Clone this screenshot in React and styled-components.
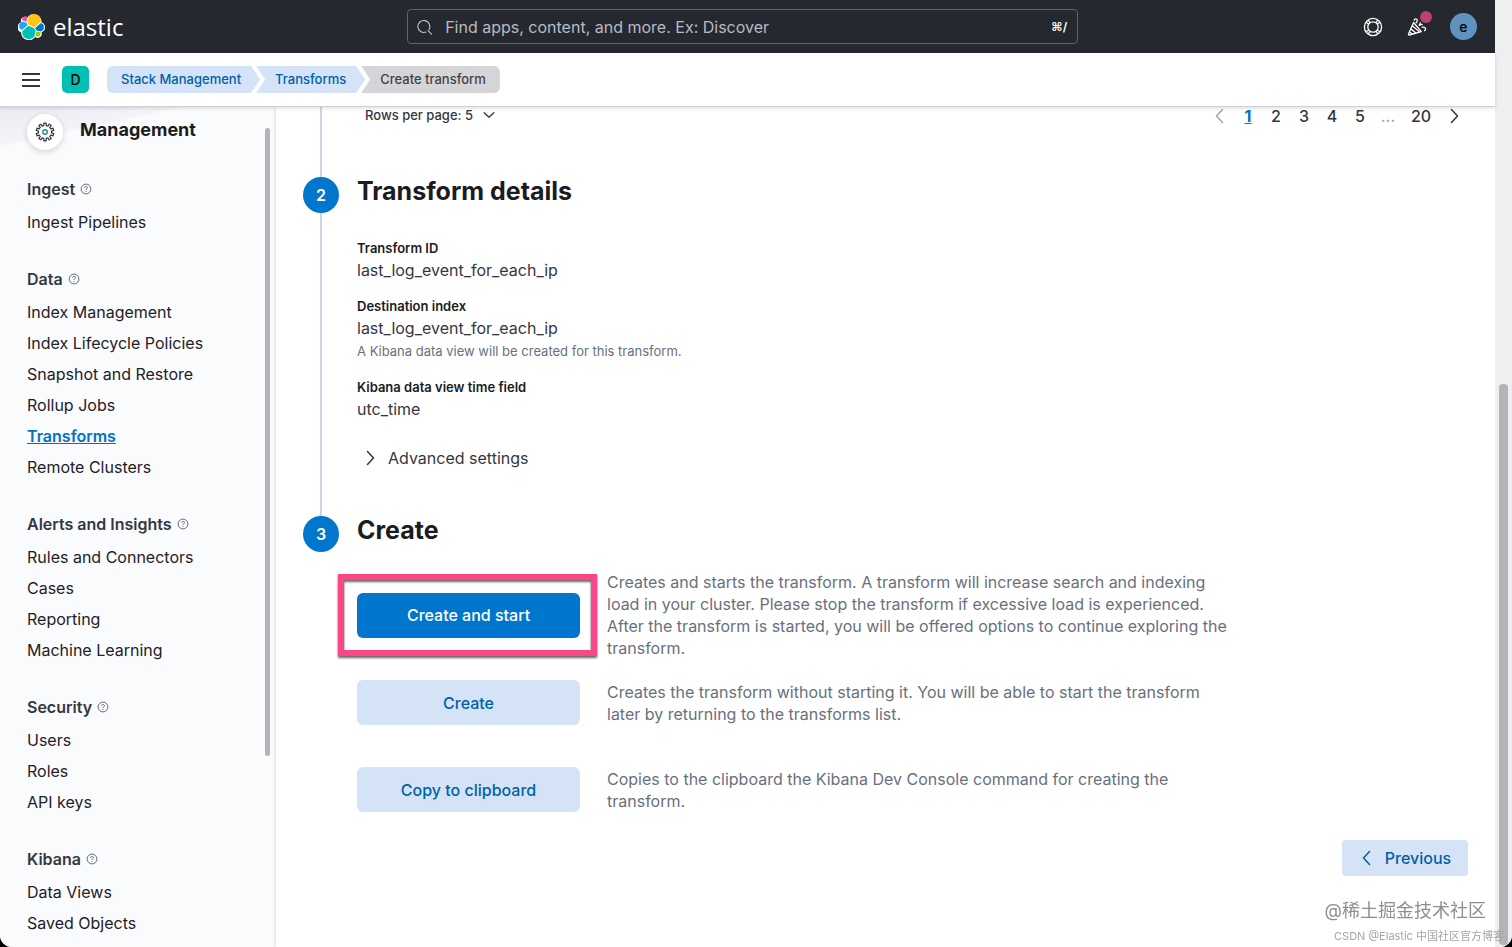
import React from 'react';
import styled, { createGlobalStyle } from 'styled-components';

const GlobalStyle = createGlobalStyle`
* {
    box-sizing: border-box;
}

body {
    margin: 0;
    background: #000;
    color: #343741;
    font-family: Inter, 'Noto Sans CJK SC', sans-serif;
    font-size: 16px;
}

button, input, select {
    font: inherit;
    color: inherit;
    border: 0;
    padding: 0;
    background: none;
}

button {
    cursor: pointer;
}

h1, h2, h3, p, ul, ol, dl, dd {
    margin: 0;
    padding: 0;
    list-style: none;
}
`

const Window = styled.div`
display: grid;
grid-template-columns: minmax(0, 1fr) 17px;
height: 100vh;
overflow: hidden;
background: #fff;
border-radius: 0 0 12px 12px;
`

const Page = styled.div`
display: flex;
flex-direction: column;
min-height: 0;
`

const Rail = styled.div`
display: flex;
flex-direction: column;
justify-content: flex-end;
align-items: center;
padding-bottom: 2px;
background: #eeeff1;
`

const Thumb = styled.div`
width: ${props => props.$width}px;
height: ${props => props.$height};
border-radius: 4px;
background: #b3b4b7;
`

const TopBar = styled.header`
display: flex;
align-items: center;
justify-content: space-between;
flex: none;
height: 53px;
padding: 0 18px;
background: #25282f;
color: #fff;
`

const Logo = styled.a`
display: flex;
align-items: center;
gap: 8px;
color: #fff;
text-decoration: none;
font: 400 24px/32px 'Open Sans', sans-serif;
`

const Search = styled.label`
display: flex;
align-items: center;
gap: 12px;
width: 46%;
height: 35px;
padding: 0 10px 0 9px;
border: 1px solid #5f636c;
border-radius: 4px;
color: #c5c7cb;
`

const SearchInput = styled.input`
flex: 1;
min-width: 0;
outline: none;

&::placeholder {
    color: #b9bbc0;
    opacity: 1;
}
`

const Shortcut = styled.span`
font-size: 12px;
font-weight: 600;
color: #fff;
`

const Actions = styled.div`
display: flex;
align-items: center;
gap: 22px;
`

const IconButton = styled.button`
position: relative;
display: flex;
align-items: center;
justify-content: center;
min-width: 22px;
height: 27px;
color: inherit;
`

const Dot = styled.span`
position: absolute;
top: -2px;
right: -4px;
width: 12px;
height: 12px;
border-radius: 50%;
background: #bf3f76;
`

const Avatar = styled.button`
width: 27px;
height: 27px;
border-radius: ${props => (props.$square ? '5px' : '50%')};
background: ${props => props.$color};
color: #000;
font-size: 14px;
line-height: 27px;
font-weight: 500;
`

const SubBar = styled.div`
position: relative;
z-index: 1;
display: flex;
align-items: center;
flex: none;
gap: 18px;
height: 54px;
padding: 0 18px;
background: #fff;
border-bottom: 1px solid #cfd1d6;
box-shadow: 0 1px 4px rgba(0, 0, 0, 0.15);
`

const MenuButton = styled(IconButton)`
width: 26px;
`

const Crumbs = styled.ol`
display: flex;
`

const Crumb = styled.li`
height: 27px;
padding: 0 19px;
background: #d4e3f7;
color: #0061a6;
font-size: 13px;
line-height: 27px;
font-weight: 500;
clip-path: polygon(0 0, calc(100% - 9px) 0, 100% 50%, calc(100% - 9px) 100%, 0 100%, 9px 50%);

a {
    color: inherit;
    text-decoration: none;
}

& + & {
    margin-left: -4px;
}

&:first-child {
    padding-left: 14px;
    border-radius: 6px 0 0 6px;
    clip-path: polygon(0 0, calc(100% - 9px) 0, 100% 50%, calc(100% - 9px) 100%, 0 100%);
}

&:last-child {
    padding-right: 14px;
    border-radius: 0 6px 6px 0;
    background: #d5d5d8;
    color: #404249;
    clip-path: polygon(0 0, 100% 0, 100% 100%, 0 100%, 9px 50%);
}
`

const Body = styled.div`
display: flex;
flex: 1;
min-height: 0;
`

const Sidebar = styled.aside`
display: flex;
justify-content: space-between;
flex: none;
width: 276px;
padding-right: 6px;
overflow: hidden;
background: linear-gradient(168deg, #e9ebf2 0, #f2f4f8 48%, transparent 51%) 0 0 / 190px 38px no-repeat, #fafbfd;
`

const SideContent = styled.nav`
padding: 7px 0 0 27px;
`

const SideTrack = styled.div`
padding-top: 21px;
`

const SideHeader = styled.div`
display: flex;
gap: 17px;
margin-bottom: 21px;
`

const SideIcon = styled.span`
display: flex;
align-items: center;
justify-content: center;
width: 36px;
height: 36px;
border-radius: 50%;
background: #fff;
box-shadow: 0 2px 6px rgba(0, 0, 0, 0.16);
`

const SideTitle = styled.h1`
font-size: 18px;
line-height: 32px;
font-weight: 700;
color: #1a1c21;
`

const Group = styled.section`
margin-bottom: 23px;
`

const GroupTitle = styled.h2`
display: flex;
align-items: center;
gap: 5px;
height: 36px;
font-size: 16px;
font-weight: 600;
`

const SideLink = styled.a`
display: block;
font-size: 16px;
line-height: 31px;
font-weight: ${props => (props.$active ? 600 : 400)};
color: ${props => (props.$active ? '#0071c2' : '#1f2127')};
text-decoration: ${props => (props.$active ? 'underline' : 'none')};
`

const Main = styled.main`
display: flex;
flex-direction: column;
flex: 1;
min-width: 0;
padding: 0 27px;
background: #fff;
box-shadow: 0 0 4px rgba(0, 0, 0, 0.2);
`

const Step = styled.section`
display: grid;
grid-template-columns: 36px minmax(0, 1fr);
column-gap: 18px;
`

const StepSide = styled.div`
display: flex;
flex-direction: column;
align-items: center;
`

const StepNumber = styled.span`
width: 36px;
height: 36px;
border-radius: 50%;
background: #0077cc;
color: #fff;
font-size: 16px;
line-height: 36px;
font-weight: 600;
text-align: center;
`

const StepLine = styled.span`
flex: 1;
width: 2px;
background: #d0d3e4;
`

const StepTitle = styled.h2`
font-size: 25px;
line-height: 28px;
font-weight: 700;
color: #1a1c21;
`

const TableFooter = styled.div`
display: flex;
justify-content: space-between;
height: 70px;
padding-left: 8px;
`

const RowsButton = styled.button`
display: flex;
align-items: center;
gap: 9px;
height: 16px;
font-size: 13px;
line-height: 16px;
font-weight: 500;
`

const Pager = styled.nav`
display: flex;
align-items: center;
height: 18px;
`

const PageButton = styled.button`
display: flex;
align-items: center;
justify-content: center;
width: ${props => (props.$wide ? 38 : 28)}px;
font-size: 16px;
line-height: 18px;
font-weight: ${props => (props.$active ? 700 : 500)};
color: ${props => (props.$active ? '#0071c2' : props.$muted ? '#a2a5ad' : '#343741')};
text-decoration: ${props => (props.$active ? 'underline' : 'none')};
`

const Details = styled.dl`
padding-top: 33px;
`

const Field = styled.div`
margin-bottom: 13px;
`

const FieldLabel = styled.dt`
font-size: 13px;
line-height: 20px;
font-weight: 600;
color: #1a1c21;
`

const FieldValue = styled.dd`
font-size: 16px;
line-height: 25px;
`

const FieldHelp = styled.dd`
padding-bottom: 3px;
font-size: 13px;
line-height: 20px;
color: #69707d;
`

const Accordion = styled.button`
display: flex;
align-items: center;
gap: 10px;
height: 24px;
margin: 24px 0 46px 5px;
`

const Options = styled.div`
padding-top: 27px;
`

const Option = styled.div`
display: grid;
grid-template-columns: 223px minmax(0, 630px);
align-items: center;
column-gap: 27px;
min-height: 87px;
`

const ButtonCell = styled.div`
position: relative;
`

const Highlight = styled.span`
position: absolute;
inset: -19px -17px -18px -19px;
border: 6px solid #fb4787;
filter: drop-shadow(0 2px 1px rgba(0, 0, 0, 0.6));
pointer-events: none;
`

const Button = styled.button`
display: block;
width: 100%;
height: 45px;
border-radius: 6px;
background: ${props => (props.$primary ? '#0077cc' : '#d4e3f6')};
color: ${props => (props.$primary ? '#fff' : '#0061a6')};
font-size: 16px;
font-weight: 500;
`

const OptionText = styled.p`
line-height: 22px;
color: #69707d;
`

const Previous = styled(Button)`
display: flex;
align-items: center;
align-self: flex-end;
justify-content: center;
gap: 10px;
flex: none;
width: 126px;
height: 36px;
margin-top: 7px;
border-radius: 4px;
`

const Watermark = styled.div`
position: fixed;
right: ${props => props.$right}px;
bottom: ${props => props.$bottom}px;
z-index: 2;
font-size: ${props => props.$size}px;
line-height: 20px;
color: ${props => props.$color};
white-space: nowrap;
`

const groups = [
    { title: 'Ingest', links: ['Ingest Pipelines'] },
    {
        title: 'Data',
        links: [
            'Index Management',
            'Index Lifecycle Policies',
            'Snapshot and Restore',
            'Rollup Jobs',
            'Transforms',
            'Remote Clusters'
        ]
    },
    { title: 'Alerts and Insights', links: ['Rules and Connectors', 'Cases', 'Reporting', 'Machine Learning'] },
    { title: 'Security', links: ['Users', 'Roles', 'API keys'] },
    { title: 'Kibana', links: ['Data Views', 'Saved Objects'] }
]

const options = [
    {
        label: 'Create and start',
        primary: true,
        text: 'Creates and starts the transform. A transform will increase search and indexing load in your cluster. Please stop the transform if excessive load is experienced. After the transform is started, you will be offered options to continue exploring the transform.'
    },
    {
        label: 'Create',
        text: 'Creates the transform without starting it. You will be able to start the transform later by returning to the transforms list.'
    },
    {
        label: 'Copy to clipboard',
        text: 'Copies to the clipboard the Kibana Dev Console command for creating the transform.'
    }
]

const ElasticMark = () => (
    <svg width="27" height="27" viewBox="0 0 32 32" aria-hidden="true">
        <path fill="#fff" d="M32 16.77a6.3 6.3 0 0 0-4.14-5.9 9.2 9.2 0 0 0-16.63-5.4 4.9 4.9 0 0 0-7.56 5.64 6.35 6.35 0 0 0 .02 11.96 9.2 9.2 0 0 0 16.6 5.36 4.9 4.9 0 0 0 7.55-5.6A6.3 6.3 0 0 0 32 16.77" />
        <path fill="#fec514" d="m12.58 13.79 7 3.2 7.07-6.2a7.9 7.9 0 0 0-14.3-6l-1.17 6z" />
        <path fill="#00bfb3" d="M5.33 21.22a7.9 7.9 0 0 0 14.35 6.02l1.16-6.07-1.55-2.97-7.04-3.2z" />
        <path fill="#f04e98" d="m5.29 9.1 4.8 1.13 1.05-5.46A3.8 3.8 0 0 0 5.29 9.1" />
        <path fill="#1ba9f5" d="M4.87 10.25a5.3 5.3 0 0 0-.1 10l6.73-6.1-1.23-2.64z" />
        <path fill="#93c90e" d="M20.87 27.2a3.78 3.78 0 0 0 5.84-4.3l-4.8-1.12z" />
        <path fill="#07c" d="m21.84 20.6 5.28 1.24a5.3 5.3 0 0 0 .1-10.01l-6.91 6.06z" />
    </svg>
)

const SearchIcon = () => (
    <svg width="16" height="16" viewBox="0 0 16 16" fill="none" stroke="currentColor" strokeWidth="1.1" strokeLinecap="round" aria-hidden="true">
        <path d="M9 13.1A6 6 0 1 1 12.1 10.4M11.1 11.6l3.4 3.6" />
    </svg>
)

const HelpRing = () => (
    <svg width="20" height="20" viewBox="0 0 20 20" fill="none" stroke="currentColor" strokeWidth="1.3" aria-hidden="true">
        <circle cx="10" cy="10" r="8.6" />
        <circle cx="10" cy="10" r="5.2" />
        <path d="M3.2 5.2l2.7 2.100M5.200 3.200l2.100 2.700M16.800 5.200l-2.700 2.100M14.800 3.200l-2.100 2.700M3.200 14.800l2.700-2.100M5.200 16.800l2.100-2.700M16.800 14.800l-2.700-2.100M14.800 16.800l-2.100-2.700" />
    </svg>
)

const CheerIcon = () => (
    <svg width="20" height="20" viewBox="0 0 20 20" fill="none" stroke="currentColor" strokeWidth="1.3" strokeLinecap="round" strokeLinejoin="round" aria-hidden="true">
        <path d="M6.6 5.5 1.5 17.1c-.2.7.2 1 .8.9l12-3.4zM5.3 8.8l7.3 6.2M4 12l4.8 4M2.7 15l2.4 2" />
        <path d="M7.2 3.2c.2-1.8 2.9-1.8 3.1.1.1 1-.5 1.9-1.1 2.5M12.2 8.4l1.2-2.6M12.2 8.4l3-1M15.3 10.4c1.8-.8 3.6.4 3.2 2-.1.6-.5 1-.9 1.2" />
    </svg>
)

const MenuIcon = () => (
    <svg width="18" height="14" viewBox="0 0 18 14" stroke="#343741" strokeWidth="2" aria-hidden="true">
        <path d="M0 1h18M0 7h18M0 13h18" />
    </svg>
)

// ten square teeth around a 20px box, angles in degrees from each tooth's centre
const gearPoints = Array.from({ length: 10 }, (_, tooth) =>
    [[-10, 6.6], [-8, 8.9], [8, 8.9], [10, 6.6]].map(([offset, radius]) => {
        const angle = ((tooth * 36 + offset) * Math.PI) / 180
        return `${(10 + radius * Math.sin(angle)).toFixed(2)},${(10 - radius * Math.cos(angle)).toFixed(2)}`
    }).join(' ')
).join(' ')

const GearIcon = () => (
    <svg width="20" height="20" viewBox="0 0 20 20" fill="none" strokeWidth="1.2" aria-hidden="true">
        <polygon points={gearPoints} stroke="#343741" strokeLinejoin="round" />
        <circle cx="10" cy="10" r="2.3" stroke="#17967f" strokeWidth="1.4" />
    </svg>
)

const QuestionIcon = () => (
    <svg width="12" height="12" viewBox="0 0 12 12" fill="none" stroke="#5a5e68" strokeWidth="0.9" aria-hidden="true">
        <circle cx="6" cy="6" r="4.9" />
        <path d="M4.6 4.9c0-1.9 2.9-1.8 2.9-.2C7.5 5.8 6 5.7 6 7M6 8v.9" />
    </svg>
)

const arrows = {
    left: 'M10.5 1.5 4.5 8l6 6.5',
    right: 'M5.5 1.5l6 6.5-6 6.5',
    down: 'M2.5 5.5 8 10.5l5.5-5'
}

const Arrow = ({ to, size = 16 }) => (
    <svg width={size} height={size} viewBox="0 0 16 16" fill="none" stroke="currentColor" strokeWidth="1.5" strokeLinecap="round" strokeLinejoin="round" aria-hidden="true">
        <path d={arrows[to]} />
    </svg>
)

const Header = () => (
    <>
        <TopBar>
            <Logo href="#home">
                <ElasticMark />
                elastic
            </Logo>
            <Search>
                <SearchIcon />
                <SearchInput type="text" aria-label="Search" placeholder="Find apps, content, and more. Ex: Discover" />
                <Shortcut>⌘/</Shortcut>
            </Search>
            <Actions>
                <IconButton aria-label="Help"><HelpRing /></IconButton>
                <IconButton aria-label="News">
                    <CheerIcon />
                    <Dot />
                </IconButton>
                <Avatar $color="#6092c0">e</Avatar>
            </Actions>
        </TopBar>
        <SubBar>
            <MenuButton aria-label="Menu"><MenuIcon /></MenuButton>
            <Avatar $square $color="#00bfb3">D</Avatar>
            <Crumbs>
                <Crumb><a href="#management">Stack Management</a></Crumb>
                <Crumb><a href="#transforms">Transforms</a></Crumb>
                <Crumb aria-current="page">Create transform</Crumb>
            </Crumbs>
        </SubBar>
    </>
)

const SideNav = () => (
    <Sidebar>
        <SideContent>
            <SideHeader>
                <SideIcon><GearIcon /></SideIcon>
                <SideTitle>Management</SideTitle>
            </SideHeader>
            {groups.map(group => (
                <Group key={group.title}>
                    <GroupTitle>
                        {group.title}
                        <QuestionIcon />
                    </GroupTitle>
                    {group.links.map(link => (
                        <SideLink key={link} href="#nav" $active={link === 'Transforms'}>{link}</SideLink>
                    ))}
                </Group>
            ))}
        </SideContent>
        <SideTrack>
            <Thumb $width={5} $height="628px" />
        </SideTrack>
    </Sidebar>
)

const App = () => {
    return (
        <Window>
            <GlobalStyle />
            <Page>
                <Header />
                <Body>
                    <SideNav />
                    <Main>
                        <Step>
                            <StepSide><StepLine /></StepSide>
                            <TableFooter>
                                <RowsButton>
                                    Rows per page: 5
                                    <Arrow to="down" size={14} />
                                </RowsButton>
                                <Pager aria-label="Pagination">
                                    <PageButton $muted aria-label="Previous page"><Arrow to="left" /></PageButton>
                                    <PageButton $active>1</PageButton>
                                    {[2, 3, 4, 5].map(page => <PageButton key={page}>{page}</PageButton>)}
                                    <PageButton as="span" $muted>...</PageButton>
                                    <PageButton $wide>20</PageButton>
                                    <PageButton aria-label="Next page"><Arrow to="right" /></PageButton>
                                </Pager>
                            </TableFooter>
                        </Step>
                        <Step>
                            <StepSide>
                                <StepNumber>2</StepNumber>
                                <StepLine />
                            </StepSide>
                            <div>
                                <StepTitle>Transform details</StepTitle>
                                <Details>
                                    <Field>
                                        <FieldLabel>Transform ID</FieldLabel>
                                        <FieldValue>last_log_event_for_each_ip</FieldValue>
                                    </Field>
                                    <Field>
                                        <FieldLabel>Destination index</FieldLabel>
                                        <FieldValue>last_log_event_for_each_ip</FieldValue>
                                        <FieldHelp>A Kibana data view will be created for this transform.</FieldHelp>
                                    </Field>
                                    <Field>
                                        <FieldLabel>Kibana data view time field</FieldLabel>
                                        <FieldValue>utc_time</FieldValue>
                                    </Field>
                                </Details>
                                <Accordion aria-expanded="false">
                                    <Arrow to="right" />
                                    Advanced settings
                                </Accordion>
                            </div>
                        </Step>
                        <Step>
                            <StepSide>
                                <StepNumber>3</StepNumber>
                            </StepSide>
                            <div>
                                <StepTitle>Create</StepTitle>
                                <Options>
                                    {options.map(option => (
                                        <Option key={option.label}>
                                            <ButtonCell>
                                                <Button $primary={option.primary}>{option.label}</Button>
                                                {option.primary && <Highlight />}
                                            </ButtonCell>
                                            <OptionText>{option.text}</OptionText>
                                        </Option>
                                    ))}
                                </Options>
                            </div>
                        </Step>
                        <Previous>
                            <Arrow to="left" />
                            Previous
                        </Previous>
                    </Main>
                </Body>
            </Page>
            <Rail>
                <Thumb $width={9} $height="calc(60% - 6px)" />
            </Rail>
            <Watermark $right={26} $bottom={26} $size={18} $color="#8d8e92">@稀土掘金技术社区</Watermark>
            <Watermark $right={8} $bottom={1} $size={11} $color="#a4a5a9">CSDN @Elastic 中国社区官方博客</Watermark>
        </Window>
    );
};

export default App;
